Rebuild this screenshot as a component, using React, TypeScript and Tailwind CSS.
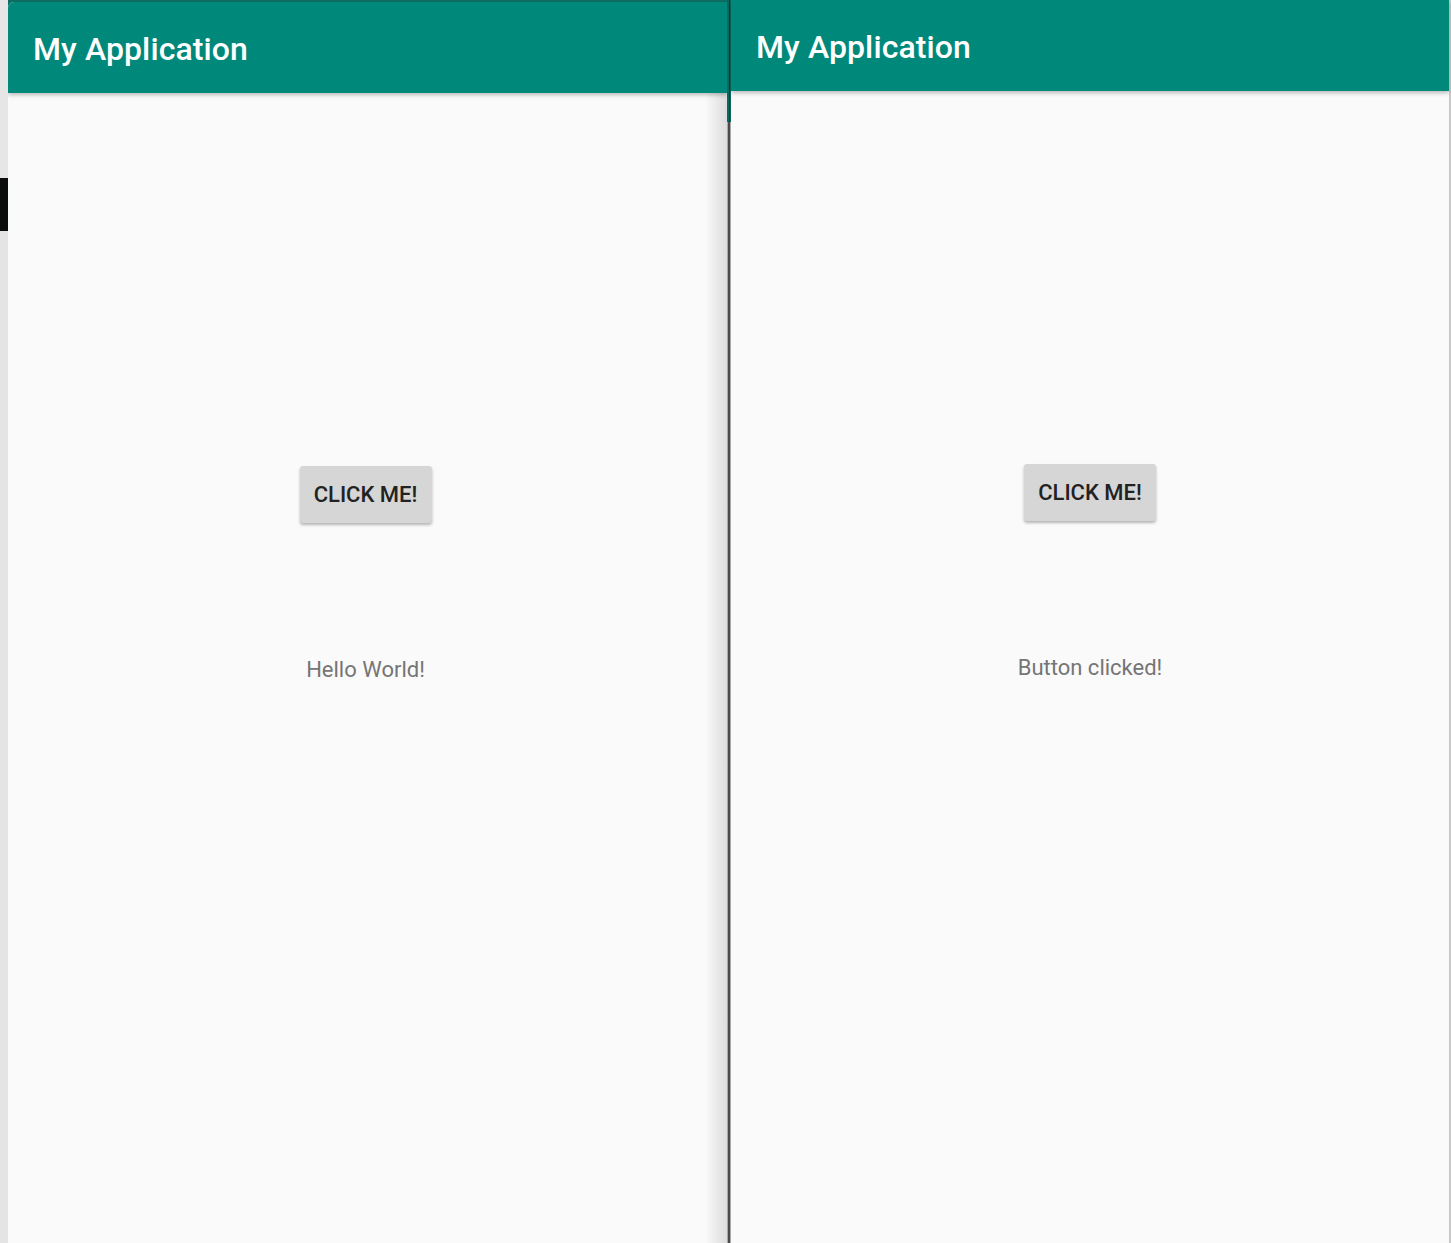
import React from "react";

function Screen({ label, shift }: { label: string; shift: string }) {
  return (
    <div className="flex flex-col h-full">
      <div className="relative z-10 h-[91px] shrink-0 bg-[#00897b] flex items-center px-[25px] shadow-[0_2px_4px_rgba(0,0,0,0.25)]">
        <span className="text-[32px] font-medium text-white tracking-[0.1px] mt-[3px]">My Application</span>
      </div>
      <div className={`flex-1 flex flex-col items-center pt-[373px] ${shift}`}>
        <button className="h-[57px] w-[132px] rounded-[3px] bg-[#d6d6d6] text-[22px] font-medium text-[#222] shadow-[0_2px_3px_rgba(0,0,0,0.28)]">
          CLICK ME!
        </button>
        <p className="mt-[134px] text-[22px] leading-[26px] text-[#757575]">{label}</p>
      </div>
    </div>
  );
}

export default function App() {
  return (
    <div className="flex h-[1243px] w-[1451px] overflow-hidden bg-[#e2e2e2] font-['Roboto',sans-serif]">
      {/* sliver of the window behind */}
      <div className="w-[8px] shrink-0 flex flex-col">
        <div className="h-[178px] bg-[#e6e6e6]" />
        <div className="h-[53px] bg-[#0b0d0c]" />
        <div className="flex-1 bg-[#e4e4e4]" />
      </div>

      {/* left device */}
      <div className="w-[719px] shrink-0 pt-[2px] bg-[#0d6b61]">
        <div className="h-full rounded-tl-[6px] overflow-hidden bg-[linear-gradient(to_left,#dcdcdc,#fafafa_22px)]">
          <Screen label="Hello World!" shift="pr-[4px]" />
        </div>
      </div>

      {/* divider */}
      <div className="w-[4px] shrink-0 flex flex-col">
        <div className="h-[122px] bg-[#0b6a60] flex justify-center">
          <div className="w-[1px] bg-[#163b37]" />
        </div>
        <div className="flex-1 bg-[#a9a9a9] flex justify-center">
          <div className="w-[2px] bg-[#4a4a4a]" />
        </div>
      </div>

      {/* right device */}
      <div className="flex-1 bg-[#fafafa]">
        <Screen label="Button clicked!" shift="" />
      </div>

      <div className="w-[2px] shrink-0 bg-[#c8c8c8]" />
    </div>
  );
}
